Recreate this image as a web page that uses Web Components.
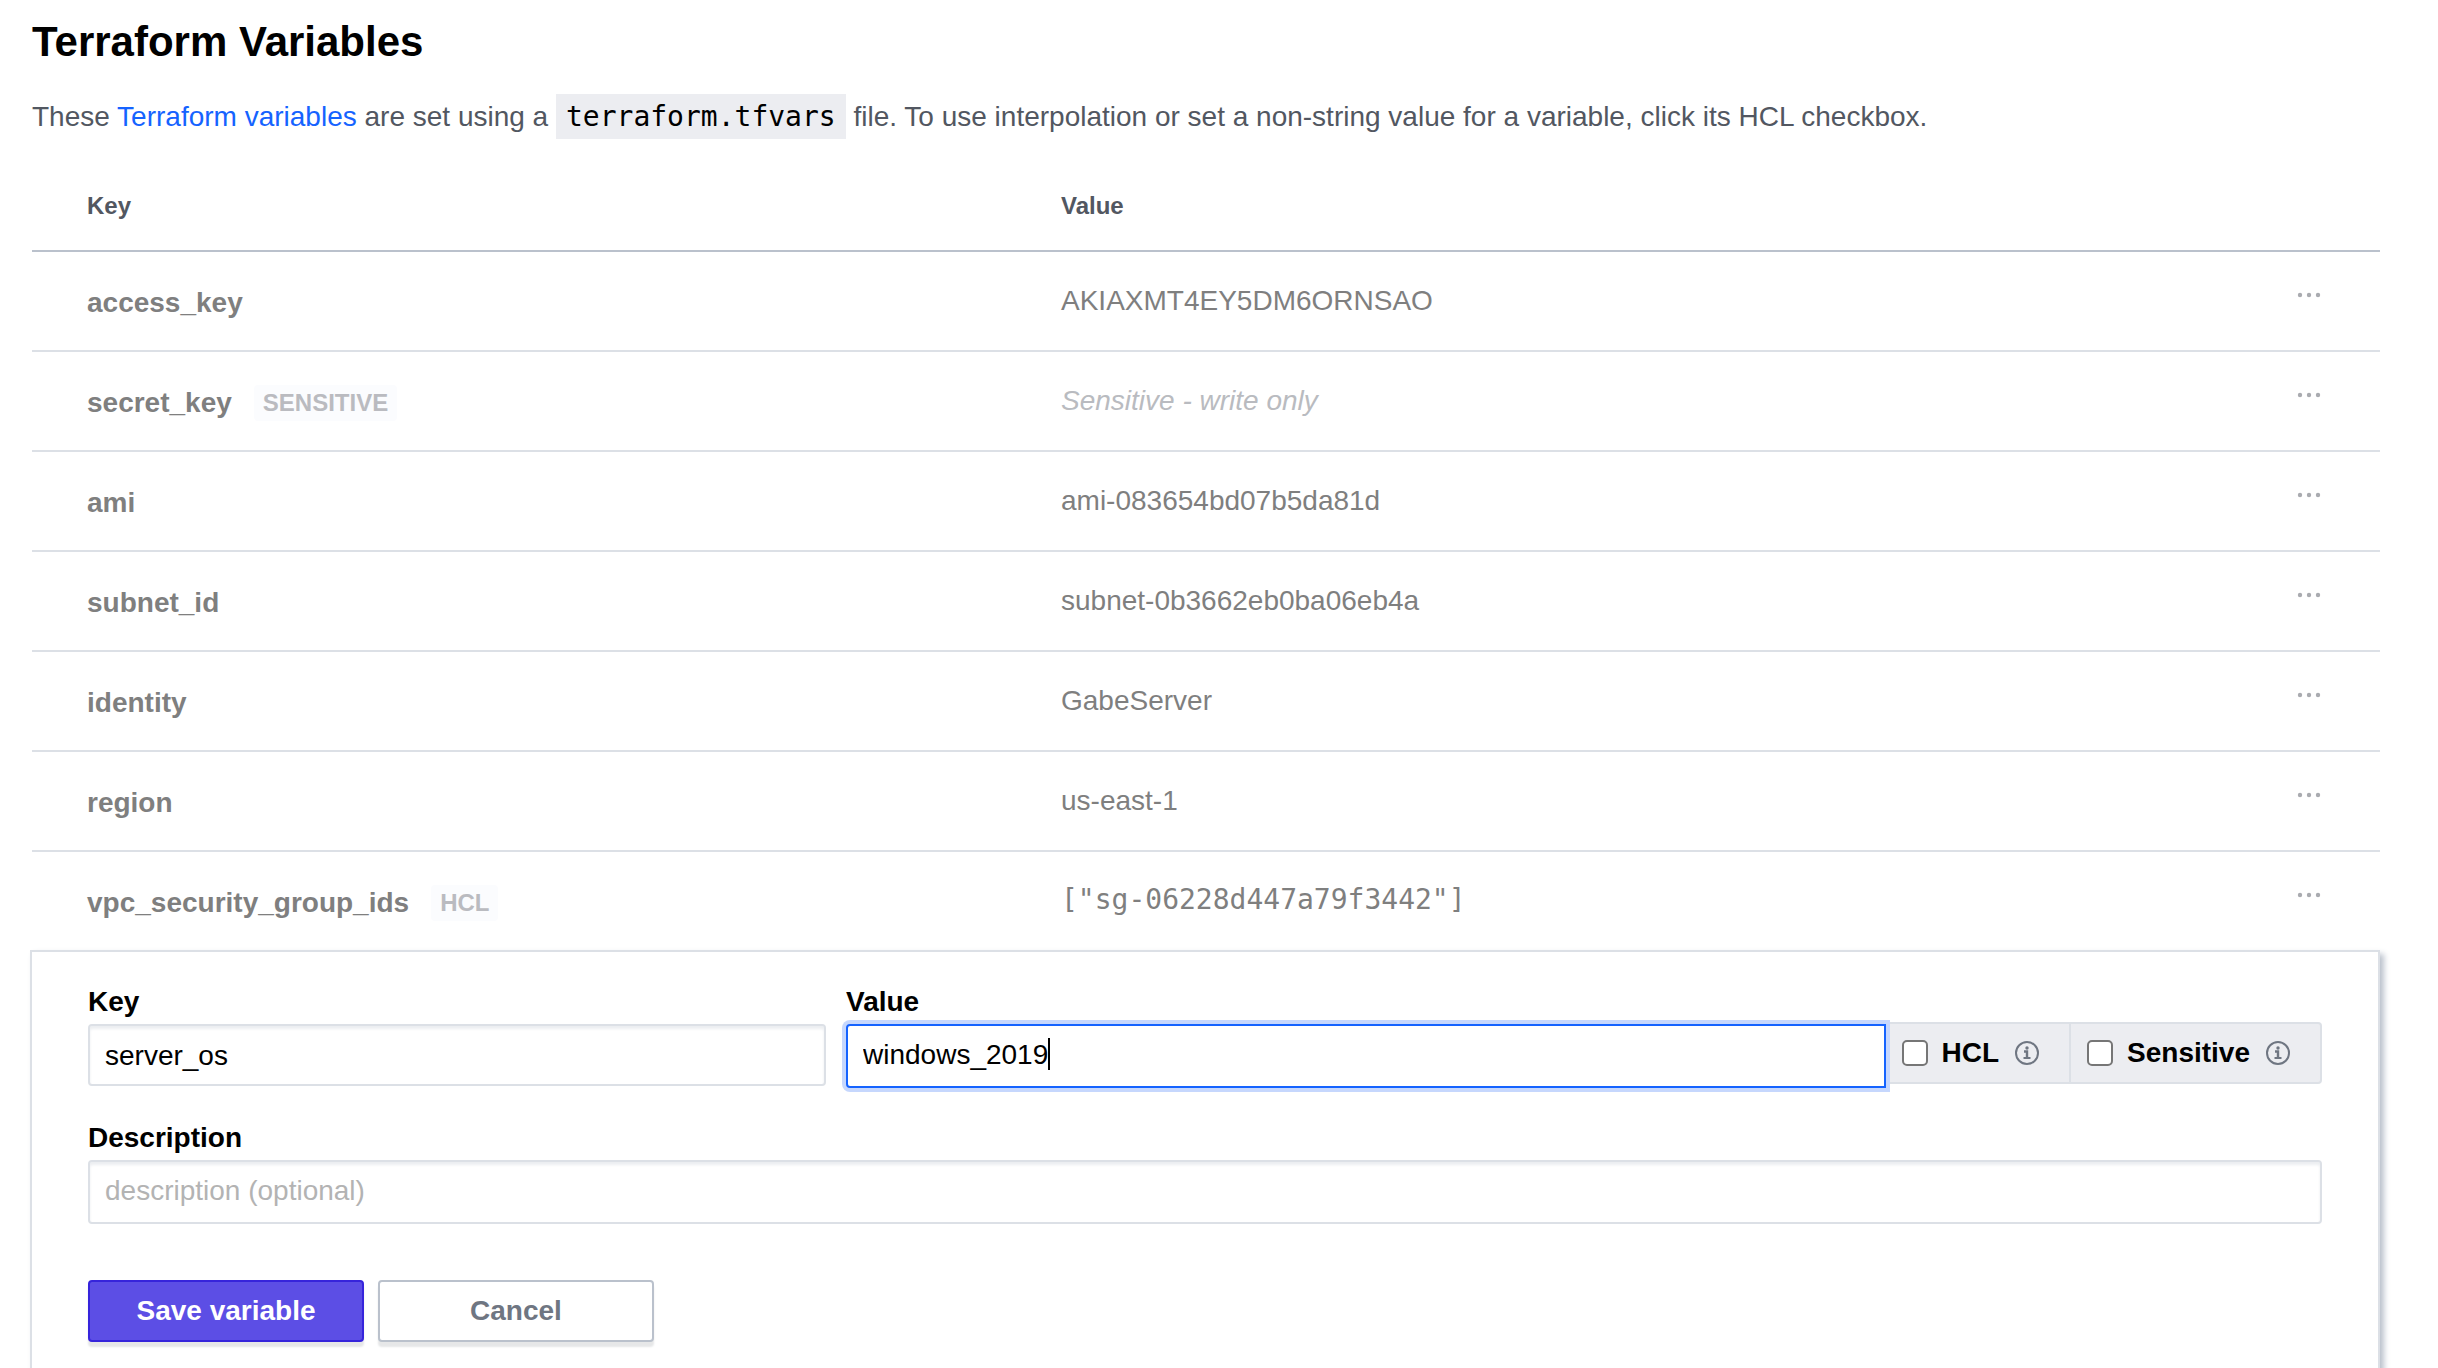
<!DOCTYPE html>
<html lang="en">
<head>
<meta charset="utf-8">
<title>Terraform Variables</title>
<style>
  body { margin: 0; background: #fff; color: #000; font: 28px/40px "Liberation Sans", Arial, sans-serif; overflow: hidden; }
</style>
</head>
<body>
<variables-page></variables-page>
<script>
const define = (name, html, setup) => customElements.define(name, class extends HTMLElement {
  constructor() {
    super();
    const t = document.createElement('template');
    t.innerHTML = html;
    this.attachShadow({ mode: 'open' }).append(t.content.cloneNode(true));
  }
  connectedCallback() { if (setup) setup(this, this.shadowRoot); }
});

define('info-icon', `<style>
  :host { display: block; width: 24px; height: 24px; color: #6f7682; }
  svg { display: block; }
</style>
<svg width="24" height="24" viewBox="0 0 24 24" fill="none" stroke="currentColor" stroke-width="2">
  <circle cx="12" cy="12" r="11"/>
  <path d="M9 10.5H12V17" stroke-width="2.4"/><path d="M8.5 17H15.5"/>
  <circle cx="12" cy="7" r="1.7" fill="currentColor" stroke="none"/>
</svg>`);

define('tag-badge', `<style>
  :host { display: inline-block; padding: 0 9px; border-radius: 4px; background: #fbfcfe; color: #babbc0; font: bold 24px/36px "Liberation Sans", Arial, sans-serif; text-transform: uppercase; }
</style><slot></slot>`);

define('variable-table', `<style>
  :host { display: block; }
  table { width: 100%; border-collapse: separate; border-spacing: 0; table-layout: fixed; }
  th, td { box-sizing: border-box; padding: 0; text-align: left; border-bottom: 2px solid #dce0e6; height: 100px; }
  thead th { height: 86px; padding-bottom: 4px; font-size: 24px; color: #525761; border-color: #bac1cc; }
  th:first-child { width: 974px; padding-left: 55px; }
  th:nth-child(2) { padding-left: 55px; }
  td { padding-left: 55px; color: #7f7f7f; }
  tbody th { color: #7f7f7f; padding-top: 4px; }
  .key { display: flex; align-items: center; gap: 22px; }
  .mono { font-family: "DejaVu Sans Mono", monospace; padding-left: 55px; padding-bottom: 2px; }
  em { color: #b9bbc0; }
  .menu { width: 118px; padding: 0 0 12px 35px; }
  button { display: block; padding: 8px 0; border: 0; background: none; color: #a9abb0; }
  svg { display: block; }
</style>
<table>
  <thead><tr><th scope="col">Key</th><th scope="col">Value</th><th class="menu"></th></tr></thead>
  <tbody></tbody>
</table>`, (host, root) => {
  const rows = [
    ['access_key', 'AKIAXMT4EY5DM6ORNSAO'],
    ['secret_key', '<em>Sensitive - write only</em>', 'Sensitive'],
    ['ami', 'ami-083654bd07b5da81d'],
    ['subnet_id', 'subnet-0b3662eb0ba06eb4a'],
    ['identity', 'GabeServer'],
    ['region', 'us-east-1'],
    ['vpc_security_group_ids', '["sg-06228d447a79f3442"]', 'HCL']
  ];
  root.querySelector('tbody').innerHTML = rows.map(([key, value, tag]) => `<tr>
    <th scope="row"><div class="key"><span>${key}</span>${tag ? `<tag-badge>${tag}</tag-badge>` : ''}</div></th>
    <td${tag === 'HCL' ? ' class="mono"' : ''}>${value}</td>
    <td class="menu"><button type="button" aria-label="Actions for ${key}"><svg width="24" height="6" viewBox="0 0 24 6" fill="currentColor"><circle cx="3" cy="3" r="2.2"/><circle cx="12" cy="3" r="2.2"/><circle cx="21" cy="3" r="2.2"/></svg></button></td>
  </tr>`).join('');
});

define('variable-form', `<style>
  * { box-sizing: border-box; }
  :host { display: block; }
  form { background: #fff; border: 2px solid #dce0e6; margin: -2px 0 0 -2px; padding: 30px 56px 64px; min-height: 480px; box-shadow: 4px 4px 6px #bac1cc; }
  label { font-weight: bold; display: block; }
  .line { display: flex; align-items: flex-start; }
  .key { width: 738px; margin-right: 20px; }
  .value { flex: 1; }
  .field { position: relative; }
  input.text { display: block; width: 100%; height: 62px; margin: 2px 0 0; padding: 2px 15px 0; border: 2px solid #dce0e6; border-radius: 4px; background: #fff; color: #000; font: inherit; box-shadow: inset 0 3px 3px #eceef1; outline: none; }
  input.text::placeholder { color: #b3b3b3; opacity: 1; }
  input.tall { height: 64px; padding: 0 15px 2px; }
  .value input.text { border-color: #1563ff; border-radius: 4px 0 0 4px; box-shadow: 0 0 0 4px #c6d7fd; caret-color: transparent; }
  .caret { position: absolute; top: 14px; left: var(--caret-x, 17px); width: 2px; height: 32px; background: #000; pointer-events: none; }
  .flags { display: flex; margin-top: 40px; height: 62px; border: 2px solid #dce0e6; border-left: 0; border-radius: 0 4px 4px 0; background: #ecedf1; }
  .flag { display: flex; align-items: center; }
  .flag + .flag { border-left: 2px solid #dce0e6; }
  .flag input { appearance: none; width: 26px; height: 26px; margin: 0 14px 0 16px; border: 2px solid #767676; border-radius: 5px; background: #fff; }
  .flag info-icon { margin: 0 30px 0 16px; }
  .description { margin-top: 30px; }
  .actions { display: flex; gap: 14px; margin-top: 56px; }
  button { width: 276px; height: 62px; padding: 0; border: 2px solid #bac1cc; border-radius: 4px; background: #fff; color: #6f7682; font: bold 28px/40px "Liberation Sans", Arial, sans-serif; box-shadow: 0 5px 2px #e6e7e8; }
  button.primary { background: #5c4ee5; border-color: #3624db; color: #fff; }
</style>
<form>
  <div class="line">
    <div class="key"><label for="key">Key</label><input class="text" id="key" value="server_os"></div>
    <div class="value"><label for="value">Value</label><div class="field"><input class="text tall" id="value" value="windows_2019"><span class="caret"></span></div></div>
    <div class="flags">
      <div class="flag"><input type="checkbox" id="hcl"><label for="hcl">HCL</label><info-icon></info-icon></div>
      <div class="flag"><input type="checkbox" id="sensitive"><label for="sensitive">Sensitive</label><info-icon></info-icon></div>
    </div>
  </div>
  <div class="description"><label for="description">Description</label><input class="text tall" id="description" placeholder="description (optional)"></div>
  <div class="actions"><button class="primary" type="submit">Save variable</button><button type="button">Cancel</button></div>
</form>`, (host, root) => {
  const value = root.getElementById('value');
  const pen = document.createElement('canvas').getContext('2d');
  // Keeps the steady caret just after the last typed character.
  const placeCaret = () => {
    pen.font = '28px "Liberation Sans", Arial, sans-serif';
    host.style.setProperty('--caret-x', Math.round(17 + pen.measureText(value.value).width) + 'px');
  };
  value.addEventListener('input', placeCaret);
  placeCaret();
  value.focus();
  value.setSelectionRange(value.value.length, value.value.length);
});

define('variables-page', `<style>
  :host { display: block; padding: 14px 58px 0 32px; }
  h1 { margin: 0; font-size: 42px; line-height: 56px; }
  p { margin: 25px 0 27px; line-height: 44px; color: #525761; }
  a { color: #1563ff; text-decoration: none; }
  code { padding: 6px 10px; background: #ecedf1; color: #000; font: 28px/32px "DejaVu Sans Mono", monospace; }
</style>
<h1>Terraform Variables</h1>
<p>These <a href="#">Terraform variables</a> are set using a <code>terraform.tfvars</code> file. To use interpolation or set a non-string value for a variable, click its HCL checkbox.</p>
<variable-table></variable-table>
<variable-form></variable-form>`);
</script>
</body>
</html>
